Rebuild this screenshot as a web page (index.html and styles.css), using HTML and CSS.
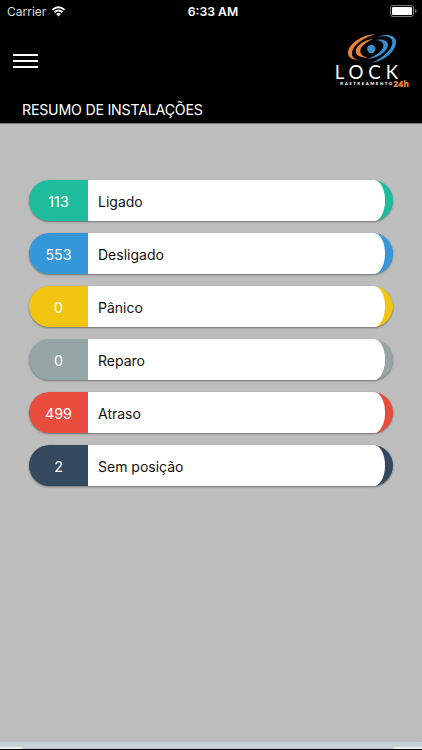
FILE: index.html
```html
<!DOCTYPE html>
<html lang="pt-BR">

<head>
    <meta charset="UTF-8">
    <meta name="viewport" content="width=device-width, initial-scale=1.0">
    <title>Resumo de Instalações</title>
    <link rel="stylesheet" href="styles.css">
</head>

<body>
    <header class="header">
        <div class="status-bar">
            <div class="carrier">
                <span>Carrier</span>
                <svg class="wifi" viewBox="0 0 14 11">
                    <path d="M0.9 3.9Q7-1.5 13.1 3.9M3 6.2Q7 2.9 11 6.2" fill="none" stroke="#fff" stroke-width="1.9" />
                    <path d="M4.6 8Q7 6.1 9.4 8L7 10.6Z" fill="#fff" />
                </svg>
            </div>
            <div class="time">6:33 AM</div>
            <svg class="battery" viewBox="0 0 27 12">
                <rect x="0.5" y="0.5" width="23" height="11" rx="2.5" fill="none" stroke="#777" />
                <rect x="2" y="2" width="20" height="8" rx="1" fill="#fff" />
                <path d="M25 4Q26.7 4.5 26.7 6T25 8Z" fill="#777" />
            </svg>
        </div>

        <div class="nav-bar">
            <button class="menu-button" aria-label="Menu">
                <span></span>
                <span></span>
                <span></span>
            </button>
            <svg class="logo" viewBox="0 0 291 198">
                <path class="orange" d="M151 19C116 18 68 47 69 76C70 90 83 97 103 95C87 93 80 86 81 74C84 51 120 27 151 19Z" />
                <path class="orange" d="M145 33C119 34 91 54 92 71C93 82 106 89 128 89C113 85 105 78 106 67C108 53 127 40 145 33Z" />
                <path class="blue" d="M159 27C179 22 202 25 202 43C202 67 168 94 138 104C177 101 213 70 213 42C213 21 184 16 159 27Z" />
                <path class="blue" d="M151 36C166 37 177 43 175 55C173 71 150 84 128 93C157 92 188 71 189 51C190 37 171 31 151 36Z" />
                <circle class="blue" cx="139" cy="63" r="12.5" />
                <text class="logo-name" x="29" y="152" textLength="190">LOCK</text>
                <text class="logo-sub" x="46" y="170" textLength="156">RASTREAMENTO</text>
                <text class="logo-hours" x="205" y="176" textLength="47" lengthAdjust="spacingAndGlyphs">24h</text>
            </svg>
        </div>

        <h1 class="title">RESUMO DE INSTALAÇÕES</h1>
    </header>

    <main class="summary">
        <div class="item green">
            <div class="count">113</div>
            <div class="label">Ligado</div>
        </div>
        <div class="item sky">
            <div class="count">553</div>
            <div class="label">Desligado</div>
        </div>
        <div class="item yellow">
            <div class="count">0</div>
            <div class="label">Pânico</div>
        </div>
        <div class="item gray">
            <div class="count">0</div>
            <div class="label">Reparo</div>
        </div>
        <div class="item red">
            <div class="count">499</div>
            <div class="label">Atraso</div>
        </div>
        <div class="item navy">
            <div class="count">2</div>
            <div class="label">Sem posição</div>
        </div>
    </main>

    <footer class="footer"></footer>
</body>

</html>
```
FILE: styles.css
```css
* {
    box-sizing: border-box;
}

body {
    margin: 0;
    height: 750px;
    overflow: hidden;
    display: flex;
    flex-direction: column;
    background-color: #bdbdbd;
    font-family: Inter, "Liberation Sans", sans-serif;
}

.header {
    height: 124px;
    background-color: #000;
    border-bottom: 1px solid #777;
    color: #fff;
}

.status-bar {
    display: grid;
    grid-template-columns: 1fr auto 1fr;
    align-items: center;
    height: 22px;
    padding: 0 5px 0 7px;
    font-size: 12px;
}

.carrier {
    display: flex;
    align-items: center;
    gap: 5px;
    color: #ddd;
}

.wifi {
    width: 15px;
    height: 11px;
}

.time {
    padding-left: 2px;
    font-size: 12.2px;
    font-weight: 600;
}

.battery {
    width: 27px;
    height: 12px;
    justify-self: end;
}

.nav-bar {
    display: flex;
    justify-content: space-between;
    height: 72px;
    padding: 6px 0 0 13px;
}

.menu-button {
    display: flex;
    flex-direction: column;
    gap: 4px;
    width: 25px;
    margin: 26px 0 0;
    padding: 0;
    border: none;
    background: none;
}

.menu-button span {
    width: 100%;
    height: 2px;
    background-color: #fff;
}

.logo {
    width: 97px;
    height: 66px;
}

.orange {
    fill: #e8833a;
}

.blue {
    fill: #3b8dcc;
}

.logo-name {
    font-family: Lato, sans-serif;
    font-size: 56px;
    fill: #fff;
}

.logo-sub {
    font-family: Lato, sans-serif;
    font-size: 13px;
    font-weight: 900;
    fill: #fff;
}

.logo-hours {
    font-family: "Open Sans", sans-serif;
    font-size: 25px;
    font-weight: 800;
    fill: #e8833a;
}

.title {
    margin: 6px 0 0 22px;
    font-size: 14.2px;
    font-weight: 400;
    line-height: 19px;
    letter-spacing: -0.22px;
}

.summary {
    flex: 1;
    display: flex;
    flex-direction: column;
    gap: 12px;
    padding: 56.4px 29px 0;
}

.item {
    display: flex;
    height: 41px;
    padding-right: 8px;
    border-radius: 20.5px;
    box-shadow: 0 1px 2px rgba(0, 0, 0, 0.4);
    font-size: 14px;
    line-height: 43px;
}

.count {
    width: 59px;
    font-size: 14.3px;
    color: #fff;
    text-align: center;
}

.label {
    flex: 1;
    padding-left: 10px;
    background-color: #fff;
    border-radius: 0 11px 11px 0 / 0 20.5px 20.5px 0;
    color: #111;
}

.green {
    background-color: #1dbc9c;
}

.sky {
    background-color: #3598db;
}

.yellow {
    background-color: #f1c40f;
}

.gray {
    background-color: #95a5a6;
}

.red {
    background-color: #e84c3d;
}

.navy {
    background-color: #34495e;
}

.footer {
    height: 8px;
    background:
        linear-gradient(#eee, #eee) left bottom / 22px 2px no-repeat,
        linear-gradient(#eee, #eee) right bottom / 28px 2px no-repeat,
        linear-gradient(#c8cccd, #cbd2d9 60%, #bfc2d5);
    border-bottom: 1px solid #000;
}
```
